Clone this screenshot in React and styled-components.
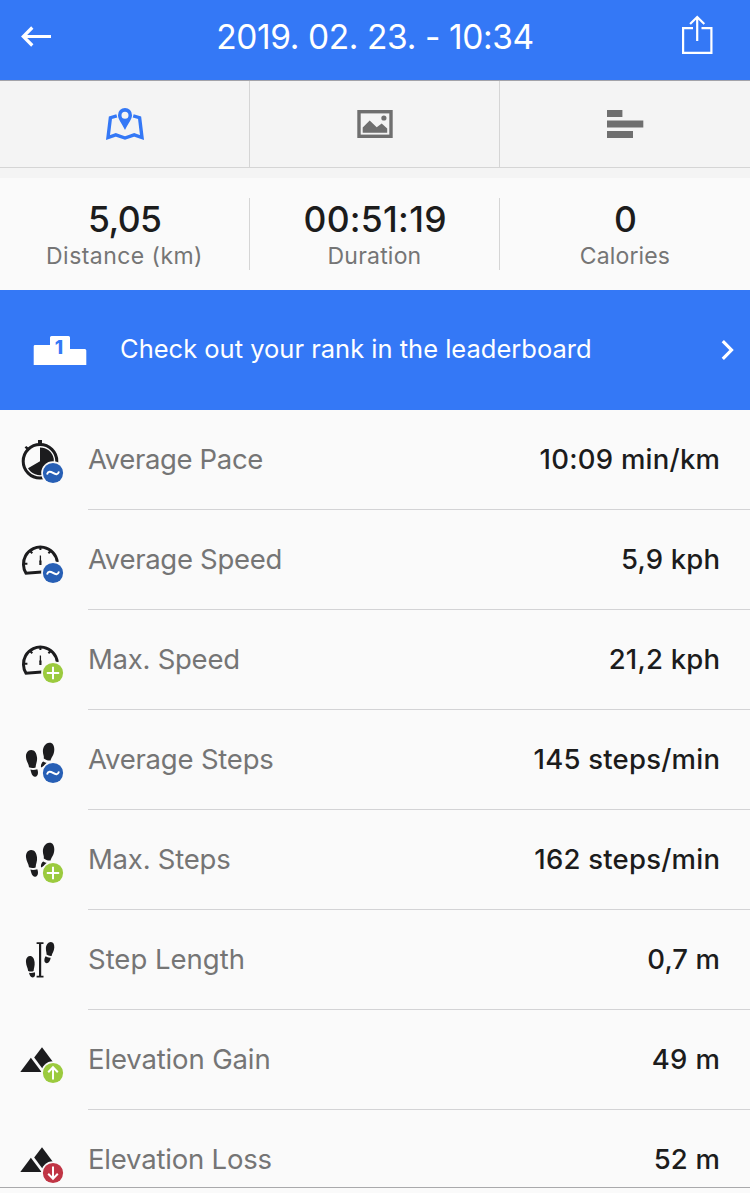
import React from 'react';
import styled, { createGlobalStyle } from 'styled-components';

const GlobalStyle = createGlobalStyle`
* {
  box-sizing: border-box;
}
body {
  margin: 0;
  background: #fafafa;
  font-family: Inter, 'Liberation Sans', sans-serif;
}
`;

const Screen = styled.div`
width: 750px;
height: 1193px;
display: flex;
flex-direction: column;
overflow: hidden;
background: #fafafa;
`;

const Header = styled.header`
display: flex;
flex: none;
height: 81px;
padding: 0 36px 0 20px;
align-items: center;
justify-content: space-between;
color: #fff;
background: #3478f6;
border-bottom: 1px solid #a3a3a9;
`;

const Title = styled.h1`
margin: 0;
padding: 0 0 5px 18px;
font-size: 33.5px;
font-weight: 400;
line-height: 41px;
letter-spacing: ${(p) => p.$spacing}px;
white-space: nowrap;
`;

const HeaderButton = styled.button`
display: flex;
padding: 0 0 ${(p) => p.$lift || 8}px;
border: 0;
background: none;
`;

const Tabs = styled.nav`
display: grid;
flex: none;
grid-template-columns: repeat(3, 250px);
height: 87px;
background: #f4f4f4;
border-bottom: 1px solid #d5d5d5;
`;

const Tab = styled.div`
display: flex;
align-items: center;
justify-content: center;
border-right: ${(p) => (p.$last ? '0' : '1px solid #d5d5d5')};
color: ${(p) => (p.$active ? '#3478f6' : '#6f6f6f')};
`;

const Summary = styled.section`
display: grid;
flex: none;
grid-template-columns: repeat(3, 250px);
height: 122px;
padding: 20px 0;
border-top: 10px solid #f4f4f4;
`;

const Stat = styled.div`
display: flex;
height: 72px;
flex-direction: column;
align-items: center;
border-right: ${(p) => (p.$last ? '0' : '1px solid #d5d5d5')};
`;

const StatValue = styled.div`
padding-left: 1px;
font-size: 35.5px;
font-weight: 500;
line-height: 43px;
letter-spacing: ${(p) => p.$spacing}px;
margin-right: ${(p) => -p.$spacing}px;
color: #1c1c1c;
`;

const StatLabel = styled.div`
padding-top: 1px;
font-size: 23px;
line-height: 29px;
letter-spacing: ${(p) => p.$spacing}px;
color: #757575;
`;

const Leaderboard = styled.div`
display: flex;
flex: none;
height: 120px;
padding: 0 15px 0 33px;
align-items: center;
color: #fff;
background: #3478f6;
`;

const LeaderboardText = styled.span`
flex: 1;
padding: 0 0 2px 33px;
font-size: 25.5px;
line-height: 32px;
letter-spacing: ${(p) => p.$spacing}px;
white-space: nowrap;
`;

const List = styled.ul`
flex: none;
height: 778px;
margin: 0;
padding: 0;
overflow: hidden;
list-style: none;
border-bottom: 1px solid #a9a9ab;
`;

const Row = styled.li`
display: flex;
height: 100px;
padding-left: 20px;
align-items: center;
`;

const RowBody = styled.div`
display: flex;
flex: 1;
height: 100px;
margin-left: 22px;
padding: 0 30px 1px 0;
align-items: center;
justify-content: space-between;
border-bottom: 1px solid #d3d3d5;
font-size: 27.5px;
line-height: 34px;
white-space: nowrap;
`;

const RowLabel = styled.span`
color: #757575;
letter-spacing: ${(p) => p.$spacing}px;
`;

const RowValue = styled.span`
color: #1c1c1c;
font-weight: 500;
letter-spacing: ${(p) => p.$spacing}px;
margin-right: ${(p) => -p.$spacing}px;
`;

const Icon = styled.svg`
display: block;
flex: none;
overflow: visible;
`;

const INK = '#1c1c1e';

function BackIcon() {
  return (
    <Icon width="32" height="22" viewBox="0 0 32 22" fill="none" stroke="#fff" strokeWidth="3.2">
      <path d="M31 11.5H3M12.3 2.5L3.3 11.5L12.3 20.5" />
    </Icon>
  );
}

function ShareIcon() {
  return (
    <Icon width="34" height="40" viewBox="0 0 34 40" fill="none" stroke="#fff" strokeWidth="2.2">
      <path d="M13 13.1H3.1V37.9H31.4V13.1H21.5M17.2 26V2.5M10.1 9L17.2 2L24.3 9" />
    </Icon>
  );
}

function MapIcon() {
  return (
    <Icon width="40" height="34" viewBox="105 106 40 34">
      <path d="M116.8 114.8L110.4 116.7L108 136.5L115.8 133.8L125 137L134.2 133.8L142 136.5L139.6 116.7L133.2 114.8" fill="none" stroke="currentColor" strokeWidth="3.4" />
      <path fillRule="evenodd" fill="currentColor" d="M125 107a7 7 0 0 1 7 7.2c0 4-3.5 7.8-7 14.8c-3.5-7-7-10.8-7-14.8a7 7 0 0 1 7-7.2zM125 110.7a3.5 3.5 0 1 0 0 7a3.5 3.5 0 1 0 0-7z" />
    </Icon>
  );
}

function PhotoIcon() {
  return (
    <Icon width="36" height="28" viewBox="0 0 36 28" fill="currentColor">
      <rect x="2" y="1.7" width="32" height="24.6" fill="none" stroke="currentColor" strokeWidth="3.4" />
      <circle cx="26.9" cy="8" r="2.6" />
      <path d="M5.7 22.8V17.5L12.7 10.5L19.7 17.2L24.7 13.5L30.2 18.5V22.8z" />
    </Icon>
  );
}

function ChartIcon() {
  return (
    <Icon width="37" height="28" viewBox="0 0 37 28" fill="currentColor">
      <rect x="0" y="0" width="15.4" height="7" />
      <rect x="0" y="10.5" width="36.3" height="7" />
      <rect x="0" y="21" width="26" height="7" />
    </Icon>
  );
}

const PodiumNumber = styled.text`
font-size: 19px;
font-weight: 800;
fill: #3478f6;
`;

function PodiumIcon() {
  return (
    <Icon width="54" height="30" viewBox="33 335 54 30">
      <path fill="#fff" d="M35 345H50V337.5Q50 336 51.5 336H68.5Q70 336 70 337.5V349H84.8Q86.3 349 86.3 350.5V365H33.7V346.3Q33.7 345 35 345z" />
      <PodiumNumber x="54.8" y="354">1</PodiumNumber>
    </Icon>
  );
}

function ChevronIcon() {
  return (
    <Icon width="14" height="22" viewBox="0 0 14 22" fill="none" stroke="#fff" strokeWidth="3.2">
      <path d="M1.8 2.2L10.5 11L1.8 19.8" />
    </Icon>
  );
}

const badges = {
  average: { color: '#275fb5', path: 'M27 37.5C28 33.8 30.3 34.2 33 35.9C35.7 37.7 38 38 39 34.5' },
  plus: { color: '#9bca3e', path: 'M26.8 36H39.2M33 29.8V42.2' },
  up: { color: '#9bca3e', path: 'M33 42.5V30.5M28.2 35.2L33 30.3L37.8 35.2' },
  down: { color: '#c03545', path: 'M33 29.5V41.5M28.2 36.8L33 41.7L37.8 36.8' },
};

function Badge({ type }) {
  const { color, path } = badges[type];
  return (
    <>
      <circle cx="33" cy="36" r="11.8" fill="#fafafa" />
      <circle cx="33" cy="36" r="10.1" fill={color} />
      <path d={path} fill="none" stroke="#fff" strokeWidth="2" />
    </>
  );
}

function Pace() {
  return (
    <>
      <circle cx="20" cy="24.3" r="16.8" fill="none" stroke={INK} strokeWidth="3" />
      <path d="M20 24.3V10.4A13.9 13.9 0 1 1 8 31.2z" fill={INK} />
      <path d="M18 3H22V7H18zM4.6 10.6L6.2 9L9.6 11.6L7.6 13.6z" fill={INK} />
    </>
  );
}

function Gauge() {
  return (
    <g fill="none" stroke={INK}>
      <path d="M21.8 34.9L6.1 36.3C2.8 31.5 2.6 24 5.6 18.7A17 17 0 0 1 37.3 25" strokeWidth="3" />
      <path d="M20.4 9V13M10 14L12.3 16.3M30.7 14L28.4 16.3M4 26.7H7.4" strokeWidth="2" />
      <path d="M20.4 18.5V25" strokeWidth="1.3" />
      <path d="M20.4 23.5V28" strokeWidth="2.2" />
    </g>
  );
}

function Steps() {
  return (
    <g fill={INK}>
      <path d="M11 13C7.6 13.2 5.7 16.3 6 20.2C6.3 24.5 8.7 26.5 9 30.2C11.2 31.3 13.5 31.2 15.6 30.4C15.8 26.8 17.5 24.5 17 20.3C16.5 15.6 14.4 12.8 11 13z" />
      <path d="M10.4 32.6C12.5 33.3 15 33 17.3 32.2C18.6 35.5 18.2 39.2 15.3 39.7C12.3 40 11.2 36.3 10.4 32.6z" />
      <path d="M29.3 5.7C25.5 6 22.8 9.8 22.9 14.5C23 17.8 24.2 19 23.8 21.5C25.6 22.9 28.6 24 30.6 23.5C31.2 20.5 34.2 18 34.3 12.8C34.4 8.2 32.6 5.5 29.3 5.7z" />
      <path d="M23.2 24.6C24.6 25.4 25.6 25.8 27 26L24 29L21 30.5C20.7 28 21.4 25.8 23.2 24.6z" />
    </g>
  );
}

function StepLength() {
  return (
    <g fill={INK}>
      <path d="M9.8 19C7.2 19.2 5.8 21.8 6 25.2C6.2 28.7 7.8 31 8.2 33.9C10 34.8 12 34.7 13.6 34C13.8 31.2 15 29 14.6 25.3C14.2 21.3 12.4 18.8 9.8 19z" />
      <path d="M9 35.8C11 36.3 13 36 14.8 35.3C15.5 37.8 15 40.3 12.7 40.5C10.4 40.5 9.6 38.3 9 35.8z" />
      <path d="M30.8 5C28 5.1 25.9 8 25.9 11.5C25.9 14.6 26.8 15.7 26.5 17.6C28 18.6 29.9 19.2 31.6 18.9C32 16.3 34.2 14.3 34.3 10.5C34.4 7 33.3 4.9 30.8 5z" />
      <path d="M25.6 19.3C27 20.2 28.8 20.9 30.7 20.7C30.3 23.8 28.8 26.4 26.5 26.2C23.7 25.8 24 21.8 25.6 19.3z" />
      <path d="M16.6 5.2H23.5V7H21.2V38.8H23.5V40.6H16.6V38.8H19V7H16.6z" />
    </g>
  );
}

function Mountains() {
  return (
    <g fill={INK}>
      <path d="M10.9 20.8L21.6 35H0.3z" />
      <path d="M22 10.3L33 25L24.2 34L14.2 20.6z" />
    </g>
  );
}

const tabs = [
  { id: 'map', icon: <MapIcon />, active: true },
  { id: 'photos', icon: <PhotoIcon /> },
  { id: 'charts', icon: <ChartIcon /> },
];

const stats = [
  { value: '5,05', label: 'Distance (km)', spacing: -0.6, labelSpacing: 0.45 },
  { value: '00:51:19', label: 'Duration', spacing: 0.28, labelSpacing: 0.2 },
  { value: '0', label: 'Calories', spacing: 0, labelSpacing: 0.13 },
];

const rows = [
  { label: 'Average Pace', value: '10:09 min/km', icon: <Pace />, badge: 'average', ls: -0.36, vs: 0.25 },
  { label: 'Average Speed', value: '5,9 kph', icon: <Gauge />, badge: 'average', ls: -0.3, vs: 0.15 },
  { label: 'Max. Speed', value: '21,2 kph', icon: <Gauge />, badge: 'plus', ls: -0.26, vs: 0.2 },
  { label: 'Average Steps', value: '145 steps/min', icon: <Steps />, badge: 'average', ls: -0.2, vs: 0.23 },
  { label: 'Max. Steps', value: '162 steps/min', icon: <Steps />, badge: 'plus', ls: -0.22, vs: 0.23 },
  { label: 'Step Length', value: '0,7 m', icon: <StepLength />, ls: 0, vs: 0.1 },
  { label: 'Elevation Gain', value: '49 m', icon: <Mountains />, badge: 'up', ls: -0.14, vs: 0.4 },
  { label: 'Elevation Loss', value: '52 m', icon: <Mountains />, badge: 'down', ls: -0.2, vs: 0.2 },
];

function App() {
  return (
    <Screen>
      <GlobalStyle />
      <Header>
        <HeaderButton aria-label="Back"><BackIcon /></HeaderButton>
        <Title $spacing={-0.4}>2019. 02. 23. - 10:34</Title>
        <HeaderButton aria-label="Share" $lift={10}><ShareIcon /></HeaderButton>
      </Header>
      <Tabs>
        {tabs.map((tab, i) => (
          <Tab key={tab.id} $active={tab.active} $last={i === tabs.length - 1}>{tab.icon}</Tab>
        ))}
      </Tabs>
      <Summary>
        {stats.map((stat, i) => (
          <Stat key={stat.label} $last={i === stats.length - 1}>
            <StatValue $spacing={stat.spacing}>{stat.value}</StatValue>
            <StatLabel $spacing={stat.labelSpacing}>{stat.label}</StatLabel>
          </Stat>
        ))}
      </Summary>
      <Leaderboard>
        <PodiumIcon />
        <LeaderboardText $spacing={0}>Check out your rank in the leaderboard</LeaderboardText>
        <ChevronIcon />
      </Leaderboard>
      <List>
        {rows.map((row) => (
          <Row key={row.label}>
            <Icon width="46" height="46" viewBox="0 0 46 46">
              {row.icon}
              {row.badge && <Badge type={row.badge} />}
            </Icon>
            <RowBody>
              <RowLabel $spacing={row.ls}>{row.label}</RowLabel>
              <RowValue $spacing={row.vs}>{row.value}</RowValue>
            </RowBody>
          </Row>
        ))}
      </List>
    </Screen>
  );
}

export default App;
